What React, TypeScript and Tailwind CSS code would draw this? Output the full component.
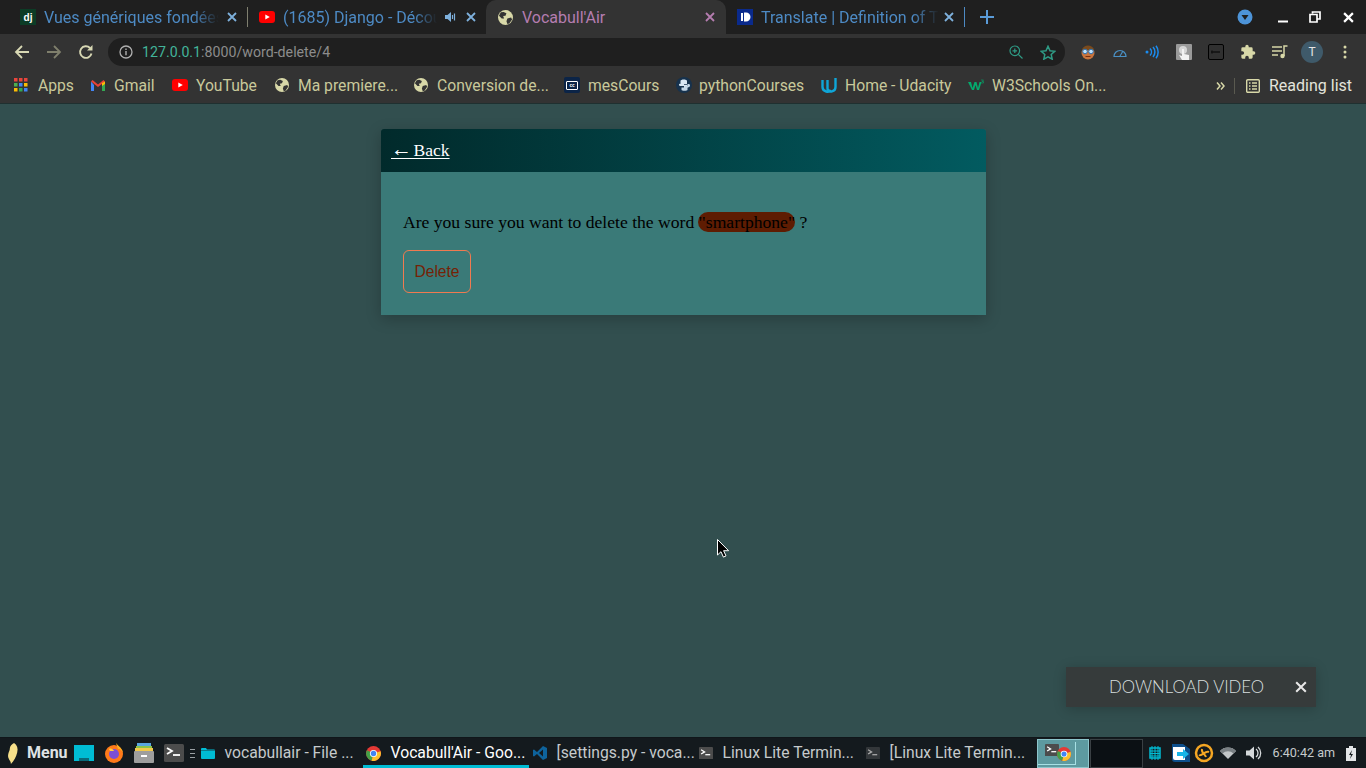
import React from "react";

const Globe = ({ c = "#d8d8a8", s = 14 }: { c?: string; s?: number }) => (
  <svg width={s} height={s} viewBox="0 0 16 16" className="shrink-0">
    <circle cx="8" cy="8" r="8" fill={c} />
    <path d="M3 2.500 6 2 9 3.500 8 6 5.500 6.500 6.500 9 4 9 1 6ZM10 9l4-1 1 2-3 4.500-2 .5-1-3Z" fill="#333" />
  </svg>
);
const Dj = () => (
  <div className="w-4 h-4 bg-[#0c3c26] text-white text-[10px] font-bold flex items-center justify-center shrink-0 font-['Liberation_Sans',sans-serif]">dj</div>
);
const Yt = ({ w = 16 }: { w?: number }) => (
  <svg width={w} height={12} viewBox="0 0 16 12" className="shrink-0">
    <rect width="16" height="12" rx="3" fill="#f00" />
    <path d="M6.300 3.500 10.800 6 6.300 8.500Z" fill="#fff" />
  </svg>
);
const Dict = () => (
  <svg width="16" height="16" viewBox="0 0 16 16" className="shrink-0">
    <rect width="16" height="16" fill="#0a2a8c" />
    <path d="M4 4h2v8H4ZM7 3.500h2a4.500 4.500 0 0 1 0 9H7Z" fill="#fff" />
  </svg>
);
const X = ({ c, s = 10, w = 1.8 }: { c: string; s?: number; w?: number }) => (
  <svg width={s} height={s} viewBox="0 0 10 10" className="shrink-0">
    <path d="M1 1 9 9M9 1 1 9" stroke={c} strokeWidth={w} fill="none" />
  </svg>
);
const Speaker = () => (
  <svg width="11" height="10" viewBox="0 0 11 10" className="shrink-0">
    <path d="M0 3h2.500L6 0v10L2.500 7H0Z" fill="#7eb0dc" />
    <path d="M7.500 3v4M9.500 1.500v7" stroke="#7eb0dc" strokeWidth="1.200" />
  </svg>
);

const tabFont = "font-['Roboto',sans-serif] text-[16px]";
const bmFont = "font-['Roboto',sans-serif] text-[15.7px] pt-px";
const fade = "[mask-image:linear-gradient(to_right,black_85%,transparent)]";

const Tab = ({ className, icon, text, textW, extra, color = "text-[#4d8ac4]", x = "#7eb0dc" }: any) => (
  <div className={`h-[34px] flex items-center shrink-0 ${className}`}>
    {icon}
    <div className={`ml-2 shrink-0 pt-px overflow-hidden whitespace-nowrap ${tabFont} ${color} ${textW} ${fade}`}>{text}</div>
    {extra}
    <X c={x} />
  </div>
);

const Bm = ({ icon, text, className, gap, color = "text-[#c9c99b]" }: any) => (
  <div className={`flex items-center shrink-0 whitespace-nowrap ${className}`}>
    <div className={`flex items-center shrink-0 ${gap}`}>{icon}</div>
    <span className={`${bmFont} ${color}`}>{text}</span>
  </div>
);

const Term = ({ s = 14, dim = false }: { s?: number; dim?: boolean }) => (
  <svg width={s} height={s * 0.9} viewBox="0 0 20 18" className="shrink-0">
    <rect width="20" height="18" rx="1.500" fill={dim ? "#33373a" : "#4c4c4c"} />
    <path d="M3 4 8 7 3 10" stroke={dim ? "#aaa" : "#fff"} strokeWidth="1.800" fill="none" />
    <path d="M9 11h7" stroke={dim ? "#aaa" : "#fff"} strokeWidth="1.800" />
  </svg>
);
const Chrome = ({ s = 15 }: { s?: number }) => (
  <svg width={s} height={s} viewBox="0 0 16 16" className="shrink-0">
    <circle cx="8" cy="8" r="8" fill="#e53935" />
    <path d="M8 8 1 4.500A8 8 0 0 0 6 15.800Z" fill="#43a047" />
    <path d="M8 8 15.500 5.500A8 8 0 0 1 6 15.800Z" fill="#fbc02d" />
    <circle cx="8" cy="8" r="3.800" fill="#fff" />
    <circle cx="8" cy="8" r="2.900" fill="#4285f4" />
  </svg>
);
const Task = ({ icon, text, className, active }: any) => (
  <div className={`h-full flex items-center shrink-0 whitespace-nowrap relative ${className}`}>
    {icon}
    <span className={`font-['Roboto',sans-serif] text-[15.7px] ${active ? "text-white" : "text-[#c6cacc]"}`}>{text}</span>
    {active && <div className="absolute left-0 right-0 bottom-0 h-[3px] bg-[#00bcd4]" />}
  </div>
);

export default function App() {
  return (
    <div className="h-[768px] w-[1366px] overflow-hidden flex flex-col bg-[#324f4f] relative">
      {/* Tab strip */}
      <div className="h-[34px] shrink-0 bg-[#1f1f1f] flex items-center relative">
        <Tab className="ml-[20px] w-[217px]" icon={<Dj />} text="Vues génériques fondées sur des classes" textW="w-[175px] mr-[8px]" />
        <div className="ml-[10px] w-px h-5 bg-[#7f7f6f] shrink-0" />
        <Tab className="ml-[11px] w-[218px]" icon={<Yt />} text="(1685) Django - Découverte" textW="w-[154px]"
          extra={<div className="ml-[8px] mr-[10px]"><Speaker /></div>} />
        <div className="ml-[9px] pl-[12px] w-[240px] h-[34px] bg-[#333333] rounded-t-[10px] flex items-center shrink-0">
          <Globe s={15} />
          <div className={`ml-[9px] pt-px w-[183px] whitespace-nowrap ${tabFont} text-[#b57db0]`}>Vocabull'Air</div>
          <X c="#b57db0" />
        </div>
        <Tab className="ml-[11px] w-[218px]" icon={<Dict />} text="Translate | Definition of Translate" textW="w-[178px] mr-[5px]" />
        <div className="ml-[9px] w-px h-5 bg-[#4d8ac4] shrink-0" />
        <svg width="14" height="14" viewBox="0 0 14 14" className="ml-[15px] shrink-0"><path d="M7 0v14M0 7h14" stroke="#5a9bd8" strokeWidth="2" /></svg>
        <div className="ml-auto flex items-center">
          <svg width="16" height="16" viewBox="0 0 16 16"><circle cx="8" cy="8" r="7.500" fill="#4d94d8" /><path d="M4.500 6h7L8 11Z" fill="#1f1f1f" /></svg>
          <svg width="12" height="12" viewBox="0 0 12 12" className="ml-[24px]"><path d="M1 10.500h10" stroke="#fff" strokeWidth="2" /></svg>
          <svg width="12" height="12" viewBox="0 0 12 12" className="ml-[20px]"><path d="M3.500 2.500V1H11v7H8.500M1 3.500h7V11H1Z" stroke="#fff" strokeWidth="1.700" fill="none" /></svg>
          <div className="ml-[22px] mr-[12px]"><X c="#fff" s={11} w={2} /></div>
        </div>
      </div>

      {/* Toolbar */}
      <div className="h-[32px] shrink-0 bg-[#333333] flex items-center pt-[4px]">
        <svg width="16" height="16" viewBox="0 0 16 16" className="ml-[14px] shrink-0"><path d="M15 8H2M8 2 2 8l6 6" stroke="#d8d8b4" strokeWidth="1.800" fill="none" /></svg>
        <svg width="16" height="16" viewBox="0 0 16 16" className="ml-[16px] shrink-0"><path d="M1 8h13M8 2l6 6-6 6" stroke="#7f7f6c" strokeWidth="1.800" fill="none" /></svg>
        <svg width="16" height="16" viewBox="0 0 16 16" className="ml-[16px] shrink-0"><path d="M13.500 9.500A5.800 5.800 0 1 1 12 4" stroke="#d8d8b4" strokeWidth="1.900" fill="none" /><path d="M9 6.500h5.500V1Z" fill="#d8d8b4" /></svg>
        <div className="ml-[14px] w-[957px] h-[28px] rounded-full bg-[#1f1f1f] flex items-center shrink-0">
          <svg width="14" height="14" viewBox="0 0 14 14" className="ml-[11px] shrink-0"><circle cx="7" cy="7" r="6" stroke="#b0b0b0" strokeWidth="1.300" fill="none" /><path d="M7 6v4.200M7 3.500v1.500" stroke="#b0b0b0" strokeWidth="1.400" /></svg>
          <div className="ml-[9px] pt-px font-['Roboto',sans-serif] text-[14.2px] whitespace-nowrap"><span className="text-[#42b49a]">127.0.0.1</span><span className="text-[#8c8c8c]">:8000/word-delete/4</span></div>
          <div className="ml-auto flex items-center">
            <svg width="14" height="14" viewBox="0 0 14 14"><circle cx="5.800" cy="5.800" r="4.800" stroke="#2f9b85" strokeWidth="1.200" fill="none" /><path d="M9.300 9.300 13.500 13.500M3.500 5.800h4.600M5.800 3.500v4.600" stroke="#2f9b85" strokeWidth="1.200" /></svg>
            <svg width="16" height="15" viewBox="0 0 16 15" className="ml-[17px] mr-[9px]"><path d="M8 1.300 10 5.800l4.800.5-3.600 3.200 1 4.700L8 11.800l-4.200 2.400 1-4.700L1.200 6.300 6 5.800Z" stroke="#2f9b85" strokeWidth="1.500" fill="none" /></svg>
          </div>
        </div>
        <div className="flex items-center shrink-0">
          <svg width="16" height="16" viewBox="0 0 16 16" className="ml-[15px]"><circle cx="8" cy="9" r="6.500" fill="#c9743d" /><path d="M2 6C3 0 13 0 14 6Z" fill="#7a4a1c" /><circle cx="5" cy="7.500" r="2.300" fill="#bfe3ff" stroke="#2a6fb0" /><circle cx="11" cy="7.500" r="2.300" fill="#bfe3ff" stroke="#2a6fb0" /><path d="M5.500 12.500h5" stroke="#7a3010" /></svg>
          <svg width="14" height="10" viewBox="0 0 14 10" className="ml-[17px]"><path d="M1 9.500a6 6 0 1 1 12 0Z" stroke="#4a90c4" strokeWidth="1.200" fill="none" /><path d="M7 9 10 4" stroke="#4a90c4" strokeWidth="1.200" /></svg>
          <svg width="14" height="14" viewBox="0 0 14 14" className="ml-[18px]"><circle cx="2" cy="7" r="1.500" fill="#1a8cf0" /><path d="M5 3.500a5 5 0 0 1 0 7M8 2a7.500 7.500 0 0 1 0 10M11 .8a10 10 0 0 1 0 12.400" stroke="#1a8cf0" strokeWidth="1.500" fill="none" /></svg>
          <svg width="16" height="16" viewBox="0 0 16 16" className="ml-[17px]"><rect width="16" height="16" rx="1" fill="#9a9a9a" /><circle cx="7" cy="6" r="4" fill="#d6d6d6" /><path d="M6 5h2v5l5 1v5H6L3 11l3 1Z" fill="#f2f2f2" /></svg>
          <svg width="16" height="16" viewBox="0 0 16 16" className="ml-[16px]"><rect x=".5" y=".5" width="15" height="15" rx="1.500" fill="#303030" stroke="#000" /><path d="M3 8h9M4 6.500v3" stroke="#111" strokeWidth="1.500" /></svg>
          <svg width="16" height="16" viewBox="0 0 24 24" className="ml-[16px]" fill="#d8d8a8"><path d="M20.500 11H19V7a2 2 0 0 0-2-2h-4V3.500a2.500 2.500 0 0 0-5 0V5H4a2 2 0 0 0-2 2v3.800h1.500a2.700 2.700 0 0 1 0 5.400H2V20a2 2 0 0 0 2 2h3.800v-1.500a2.700 2.700 0 0 1 5.400 0V22H17a2 2 0 0 0 2-2v-4h1.500a2.500 2.500 0 0 0 0-5Z" /></svg>
          <svg width="16" height="14" viewBox="0 0 16 14" className="ml-[16px]"><path d="M0 2h10M0 6h10M0 10h6" stroke="#d8d8a8" strokeWidth="1.500" /><path d="M12 11V1h3.500" stroke="#d8d8a8" strokeWidth="1.500" fill="none" /><circle cx="10.500" cy="11" r="2.200" fill="#d8d8a8" /></svg>
          <div className="ml-[13px] w-[22px] h-[22px] rounded-full bg-[#3f5a6a] flex items-center justify-center text-[#e6e6e6] text-[12px] font-['Roboto',sans-serif]">T</div>
          <svg width="4" height="14" viewBox="0 0 4 14" className="ml-[20px]"><circle cx="2" cy="2" r="1.500" fill="#d8d8a8" /><circle cx="2" cy="7" r="1.500" fill="#d8d8a8" /><circle cx="2" cy="12" r="1.500" fill="#d8d8a8" /></svg>
        </div>
      </div>

      {/* Bookmarks */}
      <div className="h-[38px] shrink-0 bg-[#333333] border-b border-[#1f3030] flex items-center pl-[14px] pt-[2px]">
        <Bm className="w-[77px]" gap="w-[24px]" text="Apps" icon={
          <svg width="14" height="14" viewBox="0 0 14 14">
            {[0, 5, 10].flatMap((y, i) => [0, 5, 10].map((x, j) => (
              <rect key={`${i}${j}`} x={x} y={y} width="3.500" height="3.500" fill={["#e8453c", "#e8453c", "#e8453c", "#4caf50", "#4285f4", "#fbbc05", "#fbbc05", "#34a853", "#4285f4"][i * 3 + j]} />
            )))}
          </svg>} />
        <Bm className="w-[81px]" gap="w-[23px]" text="Gmail" icon={
          <svg width="14" height="11" viewBox="0 0 14 11"><path d="M0 1.500V11h3V5Z" fill="#4285f4" /><path d="M14 1.500V11h-3V5Z" fill="#34a853" /><path d="M0 1.500 1.500 0 7 4.500 12.500 0 14 1.500 7 7Z" fill="#ea4335" /><path d="M11 3l3-1.500V4l-3 2Z" fill="#fbbc05" /></svg>} />
        <Bm className="w-[103px]" gap="w-[24px]" text="YouTube" icon={<Yt />} />
        <Bm className="w-[139px]" gap="w-[23px]" text="Ma premiere..." icon={<Globe />} />
        <Bm className="w-[150px]" gap="w-[23px]" text="Conversion de..." icon={<Globe />} />
        <Bm className="w-[112px]" gap="w-[24px]" text="mesCours" icon={
          <div className="w-4 h-4 rounded-[2px] bg-[#0b2447] flex items-center justify-center"><div className="w-3 h-[9px] border border-white rounded-[1px] text-white text-[5px] leading-[7px] text-center font-bold">cc</div></div>} />
        <Bm className="w-[145px]" gap="w-[23px]" text="pythonCourses" icon={
          <svg width="16" height="16" viewBox="0 0 16 16"><circle cx="8" cy="8" r="8" fill="#17324d" /><path d="M4.500 7V4C4.500 2 11 2 11 4v3H8v.8h3.500V10c0 .8-1 1-1 1H8V9H5C3.500 9 3 8.500 3 7.500S4 6.500 4.500 7Z" fill="#d9e6f2" /><path d="M11.500 7h1c1 0 1.500.5 1.500 1.500S13 10.500 11.500 10.500V13c0 1-6 1-6 0v-2.500h3V9h3Z" fill="#c4d6e6" /></svg>} />
        <Bm className="w-[147px]" gap="w-[24px]" text="Home - Udacity" icon={
          <svg width="16" height="16" viewBox="0 0 16 16"><path d="M1.500 3v7c0 5 7 6 8.500 3M14.500 1v9c0 5-6.500 6-8 2V3" stroke="#0fa6d8" strokeWidth="2.400" fill="none" /></svg>} />
        <Bm className="w-[248px]" gap="w-[24px]" text="W3Schools On..." icon={
          <svg width="16" height="12" viewBox="0 0 16 12"><path d="M0 3h3l1.500 6 2-6h2l1.500 6 1.500-6h2L11 11H9L7.500 6 6 11H4Z" fill="#04aa6d" /><path d="M13 1h2.500L14 2.500h1.500V4H13" stroke="#04aa6d" strokeWidth=".6" fill="none" /></svg>} />
        <svg width="9" height="8" viewBox="0 0 9 8" className="shrink-0"><path d="M1 .5 4 4 1 7.500M5 .5 8 4 5 7.500" stroke="#d8d8a8" strokeWidth="1.500" fill="none" /></svg>
        <div className="ml-[9px] w-px h-[16px] bg-[#5a5a50] shrink-0" />
        <svg width="14" height="14" viewBox="0 0 14 14" className="ml-[11px] shrink-0"><rect x=".7" y=".7" width="12.600" height="12.600" rx="1" stroke="#d8d8a8" strokeWidth="1.400" fill="none" /><path d="M3 4h1.500M6 4h5M3 7h1.500M6 7h5M3 10h1.500M6 10h5" stroke="#d8d8a8" strokeWidth="1.300" /></svg>
        <span className="ml-[9px] whitespace-nowrap font-['Roboto',sans-serif] text-[16px] pt-px text-[#e4e4dc]">Reading list</span>
      </div>

      {/* Page */}
      <div className="flex-1 min-h-0 pt-[25px] pl-[381px]">
        <div className="w-[605px] shadow-[0_4px_14px_rgba(0,0,0,0.22)]">
          <div className="h-[43px] rounded-t-[3px] bg-gradient-to-r from-[#012a2b] to-[#025b60] flex items-center pl-[10px]">
            <a className="font-['Liberation_Serif',serif] text-[17.6px] text-white underline underline-offset-[2px]"><span className="text-[21px] leading-none mr-[-3px]">←</span> Back</a>
          </div>
          <div className="h-[143px] bg-[#3a7a78] pt-[39px] pl-[22px] font-['Liberation_Serif',serif]">
            <p className="text-[17.6px] leading-[22px] text-black whitespace-nowrap">
              Are you sure you want to delete the word{" "}
              <span className="bg-[#5e1c02] rounded-[10px] ml-[-1px] pl-[1px]">"smartphone"</span> ?
            </p>
            <button className="mt-[17px] w-[68px] h-[43px] pt-px border border-[#f07a50] rounded-[6px] font-['Liberation_Sans',sans-serif] text-[15.6px] text-[#752206] flex items-center justify-center">Delete</button>
          </div>
        </div>
      </div>

      {/* Taskbar */}
      <div className="h-[31px] shrink-0 bg-[#141a1e] flex items-center border-t border-[#10161a]">
        <svg width="14" height="21" viewBox="0 0 12 20" className="ml-[6px] shrink-0"><path d="M7 0c3 2 4 5 3 9-1 4-3 8-6 11 0-2-1-3-2-5C0 11 3 8 3 5 3 3 5 1 7 0Z" fill="#f6e08a" /></svg>
        <span className="ml-[7px] font-['Roboto',sans-serif] font-bold text-[16px] text-[#dfe3e5]">Menu</span>
        <svg width="20" height="16" viewBox="0 0 20 16" className="ml-[6px] shrink-0"><rect width="20" height="16" fill="#00bcd4" /><rect x="5" y="13" width="10" height="3" fill="#0a6a7a" /></svg>
        <svg width="20" height="20" viewBox="0 0 20 20" className="ml-[10px] shrink-0"><circle cx="10" cy="11" r="9" fill="#ff7a1a" /><path d="M12 0c2 3 7 5 7 11 0-3-3-5-5-5Z" fill="#ffb020" /><circle cx="10" cy="11" r="5" fill="#7b4fd6" /><path d="M5 6c2-1 4 0 5 2H6Z" fill="#ffcf40" /></svg>
        <svg width="20" height="20" viewBox="0 0 20 20" className="ml-[10px] shrink-0"><rect x="3" y="0" width="14" height="3" fill="#5aa6e0" /><rect x="2" y="3" width="16" height="3" fill="#8bc34a" /><rect x="1" y="5" width="18" height="3" fill="#f2c94c" /><rect y="8" width="20" height="12" rx="1" fill="#9e9e9e" /><rect x="7" y="12" width="6" height="2" fill="#fff" /></svg>
        <div className="ml-[10px] shrink-0"><Term s={20} /></div>
        <svg width="5" height="9" viewBox="0 0 5 9" className="ml-[6px] shrink-0"><path d="M0 .5h5M0 4.500h5M0 8.500h5" stroke="#9aa0a4" /></svg>
        <svg width="14" height="11" viewBox="0 0 14 11" className="ml-[6px] mr-[10px] shrink-0"><path d="M0 1a1 1 0 0 1 1-1h4l1 1.500h7a1 1 0 0 1 1 1V10a1 1 0 0 1-1 1H1a1 1 0 0 1-1-1Z" fill="#00bcd4" /><path d="M0 2.500h14" stroke="#0a7c8c" /></svg>
        <Task className="w-[138px]" text="vocabullair - File ..." />
        <Task className="w-[166px] pl-[3px]" active icon={<div className="mr-[10px]"><Chrome /></div>} text="Vocabull'Air - Goo..." />
        <Task className="ml-[4px] w-[166px]" icon={
          <svg width="14" height="14" viewBox="0 0 14 14" className="mr-[10px] shrink-0"><path d="M10 0 14 2v10l-4 2-6-6-3 2.500L0 10V4l1-.5L4 6Z" fill="#0e639c" /><path d="M10 3.500 6 7l4 3.500Z" fill="#141a1e" /></svg>} text="[settings.py - voca..." />
        <Task className="w-[167px]" icon={<div className="mr-[10px]"><Term /></div>} text="Linux Lite Termin..." />
        <Task className="w-[171px]" icon={<div className="mr-[10px]"><Term dim /></div>} text="[Linux Lite Termin..." />
        <div className="h-[29px] w-[52px] border border-[#8ec6cc] bg-[#5d9aa0] relative shrink-0 flex items-center justify-center">
          <div className="absolute left-0 right-[12px] top-[2px] bottom-[2px] border-r border-b border-[#a8e0e4]" />
          <div className="absolute left-[7px] top-[4px]"><Term s={14} /></div>
          <div className="ml-[2px] mt-[1px] relative"><Chrome s={14} /></div>
        </div>
        <div className="h-[29px] w-[53px] ml-[1px] border border-[#3a4044] bg-[#0b1014] shrink-0" />
        <svg width="14" height="14" viewBox="0 0 14 14" className="ml-[5px] shrink-0"><rect x="2" y="2" width="10" height="10" fill="none" stroke="#00bcd4" strokeWidth="1.500" /><path d="M2 5h10M2 7.500h10M2 10h10M4 0v14M7 0v14M10 0v14" stroke="#00bcd4" /></svg>
        <svg width="18" height="18" viewBox="0 0 18 18" className="ml-[10px] shrink-0"><path d="M0 0h11l7 5v13H3a3 3 0 0 1-3-3Z" fill="#0d4f8c" /><path d="M1 3h12v13H3a2 2 0 0 1-2-2Z" fill="#fff" /><path d="M5 8h6V5l6 5-6 5v-3H5Z" fill="#16b5e8" /></svg>
        <svg width="20" height="20" viewBox="0 0 20 20" className="ml-[4px] shrink-0"><circle cx="10" cy="10" r="8" stroke="#f5a623" strokeWidth="2.500" fill="none" /><path d="M5 12c3 2 6-5 10-3M8 6c-1 4 3 5 4 8" stroke="#f5a623" strokeWidth="2" fill="none" /></svg>
        <svg width="16" height="12" viewBox="0 0 16 12" className="ml-[6px] shrink-0"><path d="M0 4a11 11 0 0 1 16 0L8 12Z" fill="#c2c6c8" /><path d="M0 4a11 11 0 0 1 16 0l-2.500 2.500a8 8 0 0 0-11 0Z" fill="#7a8084" /></svg>
        <svg width="16" height="14" viewBox="0 0 16 14" className="ml-[10px] shrink-0"><path d="M0 4.500h3.500L8 .5v13l-4.500-4H0Z" fill="#d4d8da" /><path d="M10 3a5 5 0 0 1 0 8M12 1a8 8 0 0 1 0 12" stroke="#d4d8da" strokeWidth="1.300" fill="none" /></svg>
        <span className="ml-[11px] w-[64px] font-['Roboto',sans-serif] text-[12.6px] text-[#c6cacc] whitespace-nowrap shrink-0">6:40:42 am</span>
        <svg width="10" height="15" viewBox="0 0 10 15" className="ml-[9px] shrink-0"><path d="M3 0h4v2h3v13H0V2h3Z" fill="#e4e6e8" /><path d="M6 4 3 9h2l-1 4 3-5H5Z" fill="#141a1e" /></svg>
      </div>

      {/* Overlays */}
      <div className="absolute left-[1066px] top-[667px] w-[250px] h-[40px] bg-[#363b3b] shadow-[0_2px_12px_rgba(0,0,0,0.2)] flex items-center">
        <span className="ml-[43px] font-['Lato',sans-serif] font-light text-[16.8px] text-[#d8dfdf] whitespace-nowrap">DOWNLOAD VIDEO</span>
        <div className="absolute left-[229px] top-[14px]"><X c="#e8e8e8" s={12} w={1.700} /></div>
      </div>
      <svg width="13" height="19" viewBox="0 0 13 19" className="absolute left-[717px] top-[539px]">
        <path d="M.5.500V16l3.500-3.300 2.400 5.400 2.600-1.200-2.400-5.200h5Z" fill="#000" stroke="#fff" />
      </svg>
    </div>
  );
}
